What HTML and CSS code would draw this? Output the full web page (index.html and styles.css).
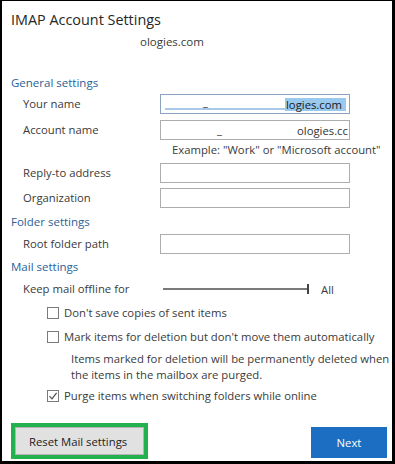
FILE: index.html
```html
<!DOCTYPE html>
<html>
<head>
<meta charset="utf-8">
<link rel="stylesheet" href="styles.css">
</head>
<body>
<div class="dialog">
  <div class="title">IMAP Account Settings</div>
  <div class="subtitle">ologies.com</div>

  <div class="heading h-general">General settings</div>
  <div class="row r1">
    <div class="label">Your name</div>
    <div class="field focused">
      <span class="blank"><span class="under">_</span></span><span class="sel">logies.com</span>
    </div>
  </div>
  <div class="row r2">
    <div class="label">Account name</div>
    <div class="field">
      <span class="blank2"><span class="under2">_</span></span><span class="clip">ologies.cc</span>
    </div>
  </div>
  <div class="hint">Example: "Work" or "Microsoft account"</div>
  <div class="row r3">
    <div class="label">Reply-to address</div>
    <div class="field"></div>
  </div>
  <div class="row r4">
    <div class="label">Organization</div>
    <div class="field"></div>
  </div>

  <div class="heading h-folder">Folder settings</div>
  <div class="row r5">
    <div class="label">Root folder path</div>
    <div class="field"></div>
  </div>

  <div class="heading h-mail">Mail settings</div>
  <div class="keep">
    <div class="label">Keep mail offline for</div>
    <div class="slider"><span class="track"></span><span class="tick"></span></div>
    <div class="all">All</div>
  </div>
  <div class="check c1"><span class="box"></span><span>Don't save copies of sent items</span></div>
  <div class="check c2"><span class="box"></span><span>Mark items for deletion but don't move them automatically</span></div>
  <div class="note">Items marked for deletion will be permanently deleted when<br>the items in the mailbox are purged.</div>
  <div class="check c3"><span class="box checked"><svg width="10" height="10" viewBox="0 0 10 10"><path d="M1.5 5.2 L4 7.8 L8.6 1.8" fill="none" stroke="#4a4a4a" stroke-width="1.2"/></svg></span><span>Purge items when switching folders while online</span></div>

  <div class="footer">
    <div class="highlight"><div class="btn reset">Reset Mail settings</div></div>
    <div class="btn next">Next</div>
  </div>
</div>
</body>
</html>
```
FILE: styles.css
```css
html, body {
  margin: 0;
  padding: 0;
  background: #fff;
}
.dialog {
  box-sizing: border-box;
  width: 395px;
  height: 464px;
  border-style: solid;
  border-color: #000;
  border-width: 1px 3px 3px 2px;
  padding: 0 0 0 9px;
  font-family: "Open Sans", "Noto Sans", sans-serif;
  font-size: 11.3px;
  color: #3a3a3a;
  background: #fff;
  overflow: hidden;
}
.title {
  margin-top: 9px;
  font-size: 14.4px;
  line-height: 20px;
  color: #262626;
}
.subtitle {
  margin-top: 4px;
  margin-left: 129px;
  line-height: 16px;
  font-size: 11.5px;
}
.heading {
  color: #2b5f96;
  font-size: 11.5px;
  line-height: 16px;
}
.h-general { margin-top: 25px; }
.h-folder { margin-top: 6px; }
.h-mail { margin-top: 5px; }
.row {
  display: flex;
  align-items: center;
  height: 20px;
}
.r1 { margin-top: 3px; }
.r2 { margin-top: 6px; }
.r3 { margin-top: 5px; }
.r4 { margin-top: 5px; }
.r5 { margin-top: 4px; }
.label {
  width: 149px;
  padding-left: 12px;
  box-sizing: border-box;
  white-space: nowrap;
  line-height: 16px;
  flex: none;
}
.field {
  box-sizing: border-box;
  width: 190px;
  height: 20px;
  border: 1px solid #adadad;
  background: #fff;
  display: flex;
  align-items: center;
  overflow: hidden;
  white-space: nowrap;
}
.field.focused {
  border-color: #8aa3c0;
}
.blank {
  position: relative;
  width: 120px;
  height: 12px;
  margin-left: 4px;
  border-bottom: 2px solid #a9c9ea;
  box-sizing: border-box;
  flex: none;
}
.under {
  position: absolute;
  left: 38px;
  top: -4px;
  color: #333;
  font-size: 11px;
}
.sel {
  background: #99c9ef;
  color: #1a1a1a;
  line-height: 13px;
  padding: 0 4px 0 1px;
}
.blank2 {
  position: relative;
  width: 136px;
  height: 12px;
  flex: none;
}
.under2 {
  position: absolute;
  left: 56px;
  top: -2px;
  color: #333;
}
.clip {
  color: #333;
}
.hint {
  margin-top: 2px;
  margin-left: 161px;
  line-height: 16px;
  white-space: nowrap;
}
.keep {
  display: flex;
  align-items: center;
  margin-top: 6px;
  height: 16px;
}
.slider {
  width: 146px;
  height: 12px;
  margin-left: 3px;
  display: flex;
  align-items: center;
  flex: none;
}
.track {
  display: block;
  width: 144px;
  height: 2px;
  background: #7a7a7a;
}
.tick {
  display: block;
  width: 2px;
  height: 10px;
  background: #444;
}
.all {
  margin-left: 12px;
}
.check {
  display: flex;
  align-items: center;
  margin-left: 36px;
  height: 16px;
  line-height: 16px;
  white-space: nowrap;
}
.c1 { margin-top: 8px; }
.c2 { margin-top: 8px; }
.c3 { margin-top: 5px; }
.box {
  box-sizing: border-box;
  width: 12px;
  height: 12px;
  border: 1px solid #7a7a7a;
  background: #fff;
  margin-right: 5px;
  flex: none;
  display: flex;
  align-items: center;
  justify-content: center;
}
.note {
  margin-top: 6px;
  margin-left: 60px;
  line-height: 16px;
  white-space: nowrap;
}
.footer {
  margin-top: 19px;
  display: flex;
  align-items: flex-start;
  justify-content: space-between;
  padding-right: 5px;
}
.highlight {
  box-sizing: border-box;
  width: 137px;
  height: 36px;
  border: 4px solid #22b14c;
  padding: 0;
}
.btn {
  box-sizing: border-box;
  display: flex;
  align-items: center;
  font-size: 11.3px;
}
.reset {
  width: 129px;
  height: 28px;
  background: #e1e1e1;
  border: 1px solid #b4b4b4;
  padding-left: 13px;
  color: #222;
}
.next {
  margin-top: 4px;
  width: 76px;
  height: 31px;
  background: #1b6ec2;
  color: #fff;
  justify-content: center;
}
```
